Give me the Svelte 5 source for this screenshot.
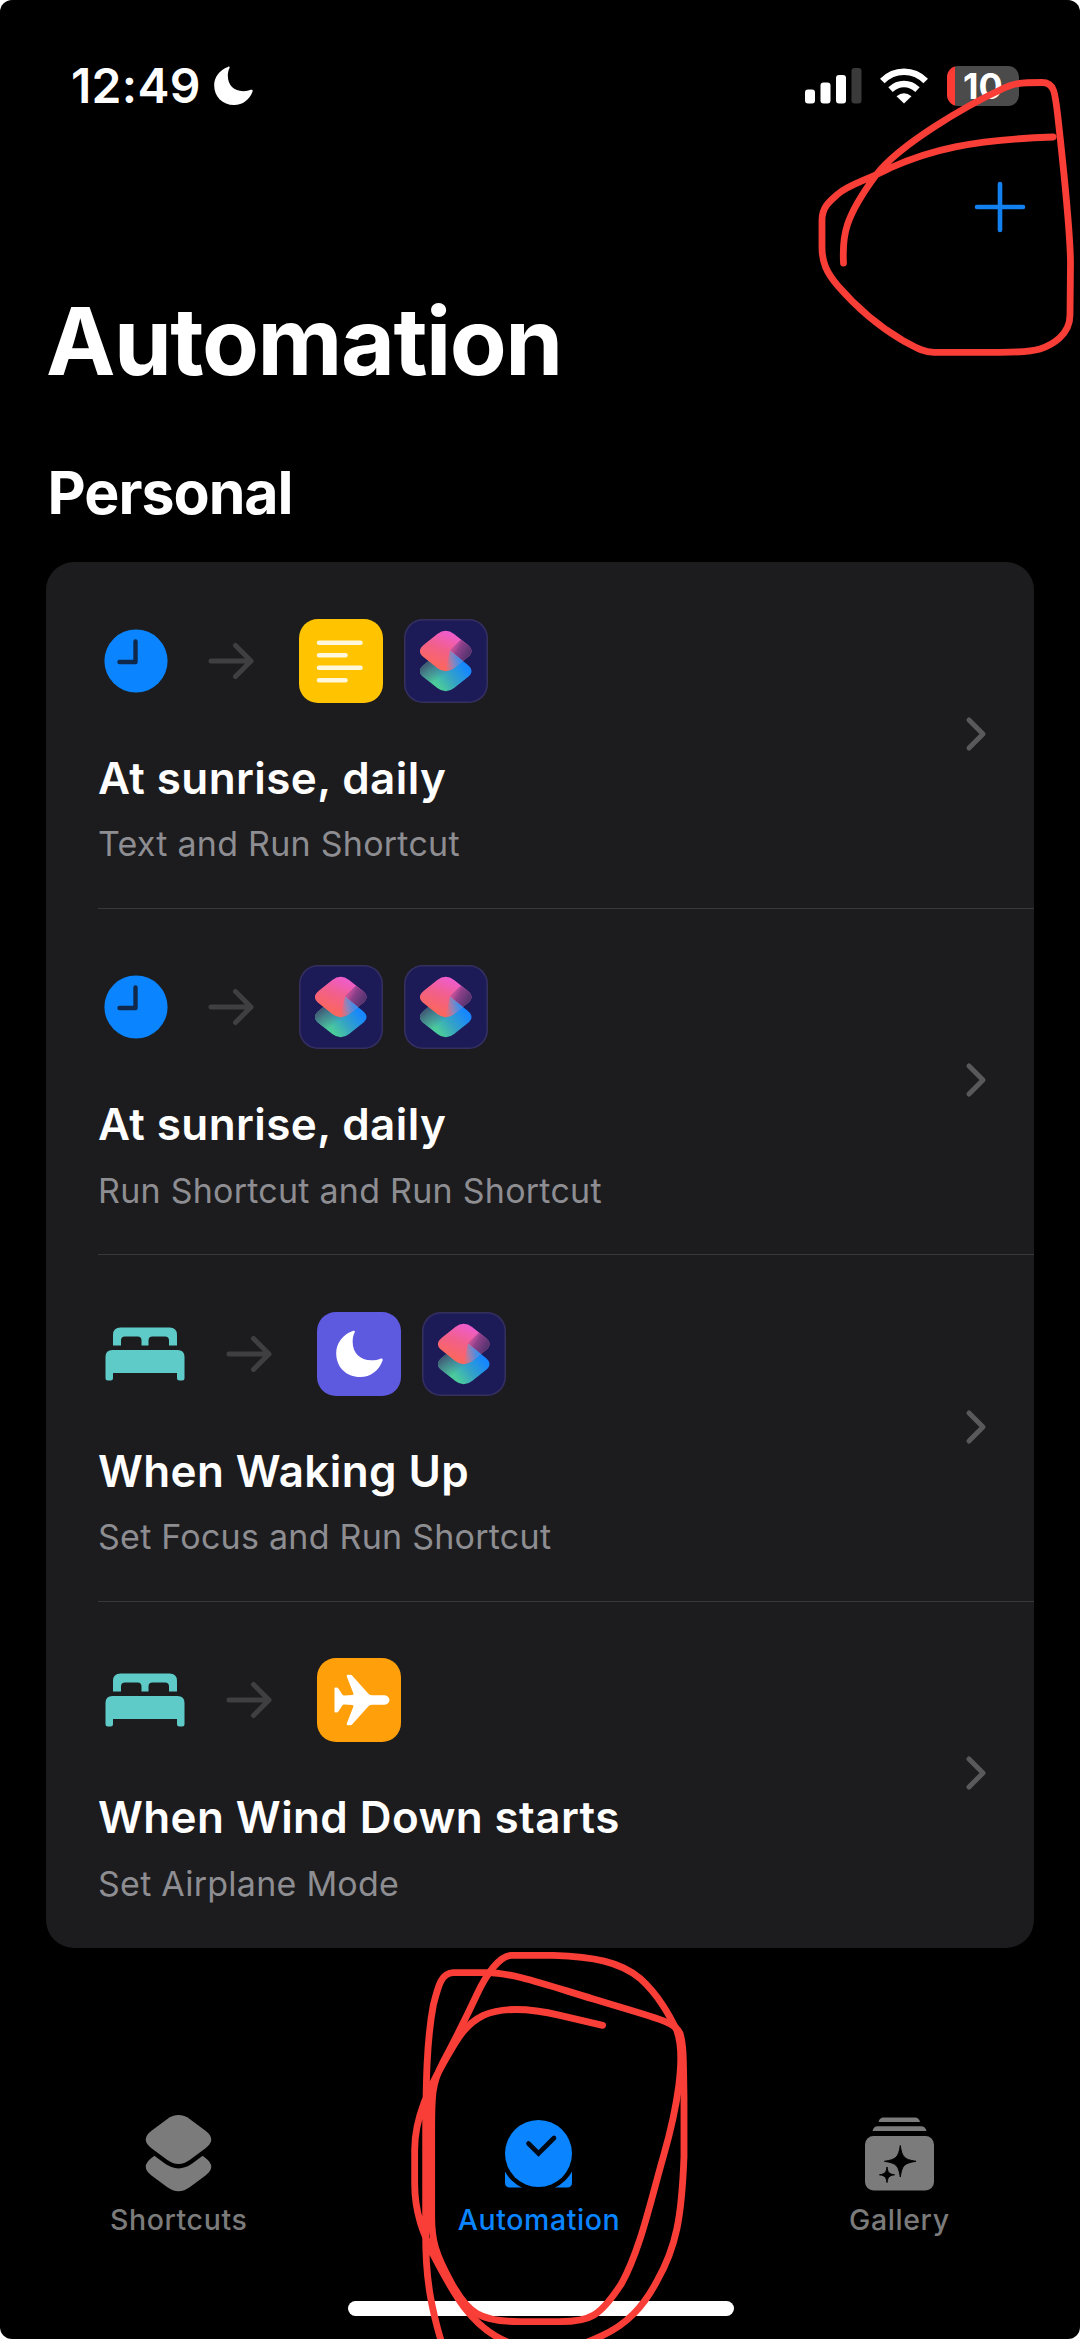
<script lang="ts">
	type Action = 'text' | 'shortcut' | 'focus' | 'airplane';

	interface Automation {
		trigger: 'clock' | 'bed';
		actions: Action[];
		title: string;
		summary: string;
	}

	const automations: Automation[] = [
		{
			trigger: 'clock',
			actions: ['text', 'shortcut'],
			title: 'At sunrise, daily',
			summary: 'Text and Run Shortcut'
		},
		{
			trigger: 'clock',
			actions: ['shortcut', 'shortcut'],
			title: 'At sunrise, daily',
			summary: 'Run Shortcut and Run Shortcut'
		},
		{
			trigger: 'bed',
			actions: ['focus', 'shortcut'],
			title: 'When Waking Up',
			summary: 'Set Focus and Run Shortcut'
		},
		{
			trigger: 'bed',
			actions: ['airplane'],
			title: 'When Wind Down starts',
			summary: 'Set Airplane Mode'
		}
	];

	const tabs = ['Shortcuts', 'Automation', 'Gallery'];
	let activeTab = $state('Automation');
</script>

{#snippet moon(size: number)}
	<svg width={size} height={size} viewBox="0 0 46 46" fill="currentColor">
		<path
			d="M16.4 1.1C17.6 .3 19 .8 18.3 2.3C16.9 5.2 16.3 8.3 16.3 11.6C16.3 22.6 23.5 29.7 34.6 29.7C38.3 29.7 41 29 43.3 28.1C45.1 27.5 46.1 28.5 45.5 30C42 39.6 33.9 46 23.7 46C10 46 .2 36.3 .2 22.7C.2 13.3 6.6 4.6 16.4 1.1Z"
		/>
	</svg>
{/snippet}

{#snippet triggerIcon(name: string)}
	{#if name === 'clock'}
		<svg width="64" height="64" viewBox="0 0 64 64">
			<circle cx="32" cy="32" r="31.6" fill="#0a84ff" />
			<path d="M31.5 12.5V33H15.5" fill="none" stroke="#10284a" stroke-width="4.400" stroke-linecap="round" stroke-linejoin="round" />
		</svg>
	{:else}
		<svg width="80" height="54" viewBox="0 0 80 54" fill="#5fcbc9">
			<path d="M8 18.500V8Q8 .500 15.500 .500H64.500Q72 .500 72 8V18.500H64V13.500Q64 9.500 60 9.500H47.500Q43.500 9.500 43.500 13.500V18.500H36.500V13.500Q36.500 9.500 32.500 9.500H20Q16 9.500 16 13.500V18.500Z" />
			<path d="M.500 30Q.500 23 7.500 23H72.500Q79.500 23 79.500 30V51Q79.500 53.500 77 53.500H74.500Q72 53.500 72 51V46H8V51Q8 53.500 5.500 53.500H3Q.500 53.500 .500 51Z" />
		</svg>
	{/if}
{/snippet}

{#snippet shortcutArt()}
	<svg width="84" height="84" viewBox="0 0 84 84">
		<defs>
			<linearGradient id="lower" x1="34" y1="66" x2="60" y2="46" gradientUnits="userSpaceOnUse">
				<stop offset="0" stop-color="#4bcb9c" />
				<stop offset=".45" stop-color="#35a3c4" />
				<stop offset="1" stop-color="#1687ff" />
			</linearGradient>
			<linearGradient id="lowerShade" x1="22" y1="43" x2="35" y2="60" gradientUnits="userSpaceOnUse">
				<stop offset="0" stop-color="#40506f" />
				<stop offset=".6" stop-color="#44788c" stop-opacity=".6" />
				<stop offset="1" stop-color="#44788c" stop-opacity="0" />
			</linearGradient>
			<linearGradient id="upper" x1="46" y1="12" x2="32" y2="46" gradientUnits="userSpaceOnUse">
				<stop offset="0" stop-color="#ee5cd2" />
				<stop offset=".55" stop-color="#f26088" />
				<stop offset="1" stop-color="#fb6660" />
			</linearGradient>
			<linearGradient id="upperShade" x1="46" y1="27" x2="64" y2="37" gradientUnits="userSpaceOnUse">
				<stop offset="0" stop-color="#b04c9f" stop-opacity=".3" />
				<stop offset=".45" stop-color="#8d4089" />
				<stop offset="1" stop-color="#553470" />
			</linearGradient>
			<linearGradient id="fold" x1="40" y1="47" x2="56" y2="44" gradientUnits="userSpaceOnUse">
				<stop offset="0" stop-color="#c77795" stop-opacity="0" />
				<stop offset=".55" stop-color="#9184b8" />
				<stop offset="1" stop-color="#3f8eea" />
			</linearGradient>
		</defs>
		<path d="M20.100 45.400L33.300 35.100H50L63.300 45.400Q71.700 52 63.300 58.600L50.100 68.900Q41.700 75.500 33.300 68.900L20.100 58.600Q11.700 52 20.100 45.400Z" fill="url(#lower)" />
		<path d="M20.100 45.400L33.300 35.100H50L63.300 45.400Q71.700 52 63.300 58.600L50.100 68.900Q41.700 75.500 33.300 68.900L20.100 58.600Q11.700 52 20.100 45.400Z" fill="url(#lowerShade)" />
		<path d="M33.300 15.100Q41.700 8.500 50.100 15.100L63.300 25.400Q71.700 32 63.300 38.600L50.100 48.900Q41.700 55.500 33.300 48.900L20.100 38.600Q11.700 32 20.100 25.400Z" fill="url(#upper)" />
		<path d="M46 31L57 20.500L63.300 25.400Q71.700 32 63.300 38.600L58.700 42.200Z" fill="url(#upperShade)" />
		<path d="M46 31.500L59.100 41.900L50.100 48.900Q45.900 52.200 41.700 52.200Z" fill="url(#fold)" />
	</svg>
{/snippet}

{#snippet actionIcon(name: Action)}
	<span class="tile {name}">
		{#if name === 'text'}
			<svg width="84" height="84" viewBox="0 0 84 84" fill="none" stroke="#fff8dc" stroke-width="4.600" stroke-linecap="round">
				<path d="M20 23.700H61.500M20 36.200H46.500M20 48.700H61.500M20 61.200H46.500" />
			</svg>
		{:else if name === 'shortcut'}
			{@render shortcutArt()}
		{:else if name === 'focus'}
			{@render moon(47)}
		{:else}
			<svg width="56" height="52" viewBox="0 0 56 52" fill="currentColor">
				<path d="M50 21.200C53.500 21.200 55.500 24 55.500 26S53.500 30.800 50 30.800H37.500Q35.500 30.800 34.200 32.400L18.300 50.300Q17.500 51.200 16.300 51.200H13.900Q12.200 51.200 12.800 49.500L19.400 32.600Q20 30.900 18.200 30.900L10.200 30.500Q9 30.500 8.300 31.500L4.400 37.500Q3.700 38.500 2.600 38.500H1.600Q.500 38.500 .500 37.300V14.700Q.500 13.500 1.600 13.500H2.600Q3.700 13.500 4.400 14.500L8.300 20.500Q9 21.500 10.200 21.500L18.200 21.100Q20 21.100 19.400 19.400L12.800 2.500Q12.200 .800 13.900 .800H16.300Q17.500 .800 18.300 1.700L34.200 19.600Q35.500 21.200 37.500 21.200Z" />
			</svg>
		{/if}
	</span>
{/snippet}

{#snippet tabIcon(name: string)}
	{#if name === 'Shortcuts'}
		<svg width="67" height="77" viewBox="0 0 67 77" fill="currentColor">
			<path d="M22 31.400L6.500 43Q-5 51.700 6.500 60.400L22 72Q33.500 80.400 45 72L60.500 60.400Q72 51.700 60.500 43L45 31.400Z" />
			<path d="M22 4.200Q33.500 -4.200 45 4.200L60.500 15.800Q72 24.500 60.500 33.200L45 44.800Q33.500 53.200 22 44.800L6.500 33.200Q-5 24.500 6.500 15.800Z" stroke="#000" stroke-width="8.600" paint-order="stroke" />
		</svg>
	{:else if name === 'Automation'}
		<svg width="67" height="68" viewBox="0 0 67 68" fill="currentColor">
			<path d="M0 51.500V62.500Q0 67.500 5 67.500H62Q67 67.500 67 62.500V51.500Z" />
			<circle cx="33.500" cy="33.500" r="38" fill="#000" />
			<circle cx="33.500" cy="33.500" r="33.500" />
			<path d="M23.500 23.500L33.500 33.500L49 18" fill="none" stroke="#000814" stroke-width="4.600" stroke-linecap="round" />
		</svg>
	{:else}
		<svg width="69" height="74" viewBox="0 0 69 74" fill="currentColor">
			<path d="M13.500 5Q14.500 .500 18.500 .500H50Q54 .500 55 5Z" />
			<path d="M7.500 14Q8.500 9.300 12.500 9.300H56Q60.500 9.300 61.500 14Z" />
			<rect y="19" width="69" height="54.500" rx="8.500" />
			<path d="M35.300 28.500C37 40 39 42.500 51 44.300C39 46.200 37 48.500 35.300 60C33.500 48.500 31.500 46.200 19.500 44.300C31.500 42.500 33.500 40 35.300 28.500Z" fill="#000" stroke="#000" stroke-linejoin="round" />
			<path d="M22 50C22.800 55.500 24 57 29.500 57.800C24 58.700 22.800 60 22 65.500C21.200 60 20 58.700 14.500 57.800C20 57 21.200 55.500 22 50Z" fill="#000" stroke="#000" stroke-linejoin="round" />
		</svg>
	{/if}
{/snippet}

<div class="screen">
	<header class="status-bar">
		<div class="clock">
			<span class="time">12:49</span>
			{@render moon(39)}
		</div>
		<div class="indicators">
			<svg class="signal" width="57" height="36" viewBox="0 0 57 36" fill="#fff">
				<rect y="21.500" width="10" height="14" rx="3" />
				<rect x="15.500" y="14.500" width="10" height="21" rx="3" />
				<rect x="31" y="7" width="10" height="28.500" rx="3" />
				<rect x="46.500" y="0" width="10" height="35.500" rx="3" fill="#3a3a3a" />
			</svg>
			<svg class="wifi" width="48" height="36" viewBox="0 0 48 36" fill="none" stroke="#fff" stroke-width="6.400">
				<path d="M2.300 13Q11.500 3.700 24 3.700T45.700 13" />
				<path d="M10.500 21.600Q16.500 16 24 16T37.500 21.600" />
				<path d="M24 35.600L16.500 28.200Q24 22.200 31.500 28.200Z" fill="#fff" stroke="none" />
			</svg>
			<div class="battery"><span>10</span></div>
		</div>
	</header>

	<div class="toolbar">
		<button class="add" aria-label="New automation">
			<svg width="52" height="52" viewBox="0 0 52 52" fill="none" stroke="currentColor" stroke-width="4.600" stroke-linecap="round">
				<path d="M26 3V49M3 26H49" />
			</svg>
		</button>
	</div>

	<h1>Automation</h1>
	<h2>Personal</h2>

	<ul class="card">
		{#each automations as item}
			<li class="row">
				<div class="row-body">
					<div class="flow">
						<span class="trigger {item.trigger}-trigger">{@render triggerIcon(item.trigger)}</span>
						<svg class="arrow" width="46" height="38" viewBox="0 0 46 38" fill="none" stroke="#3f3f41" stroke-width="5" stroke-linecap="round" stroke-linejoin="round">
							<path d="M3 19H43M27.500 3.500L43 19L27.500 34.500" />
						</svg>
						<div class="tiles">
							{#each item.actions as action}
								{@render actionIcon(action)}
							{/each}
						</div>
					</div>
					<h3>{item.title}</h3>
					<p>{item.summary}</p>
				</div>
				<svg class="chevron" width="22" height="36" viewBox="0 0 22 36" fill="none" stroke="#59595c" stroke-width="5" stroke-linecap="round" stroke-linejoin="round">
					<path d="M4 4L18 18L4 32" />
				</svg>
			</li>
		{/each}
	</ul>

	<nav class="tab-bar">
		{#each tabs as tab}
			<button class="tab" class:active={activeTab === tab} onclick={() => (activeTab = tab)}>
				<span class="tab-icon">{@render tabIcon(tab)}</span>
				<span class="tab-label">{tab}</span>
			</button>
		{/each}
	</nav>

	<div class="home-indicator"></div>

	<!-- hand-drawn marker rings -->
	<svg class="marker" width="1080" height="2339" viewBox="0 0 1080 2339" fill="none" stroke="#f93e37" stroke-linecap="round" stroke-linejoin="round">
		<path
			stroke-width="6.800"
			d="M843.500 263C842 235 845 217 876 175C901 143 968 105 1000 90C1014 83 1020 82.500 1042 82.500C1054 82.500 1055 91 1058 118C1061 145 1070 230 1070.500 262L1070 315C1070 335 1052 345 1040 349C1030 352 1018 352.300 1000 352.300H934C923 352 917 348 902 340C880 327 858 309 838 286C826 272 822 262 822 247V220C822 207 830 201 838 194C850 184 863 182 890 168C930 150 970 140 1053 137"
		/>
		<g transform="translate(380 1930) scale(.33333)" stroke-width="20.500">
			<path d="M668 286L540 256C450 235 370 230 310 256C250 285 225 340 190 400C150 470 104 560 104 660V760C104 850 130 910 160 975C215 1080 270 1190 380 1235C480 1270 580 1260 660 1220C740 1185 790 1130 830 1055C890 950 905 860 912 680V500C910 400 912 350 900 310C885 275 830 265 640 207C500 165 400 128 320 128H220C185 128 175 165 160 225C140 330 138 460 137 600V920C137 1050 155 1140 187 1245" />
			<path d="M155 600C155 500 155 460 190 395C235 310 255 270 290 195C320 130 360 76 395 76H520C640 80 720 95 780 145C840 200 870 260 890 300C920 380 890 540 850 680C810 820 780 960 725 1060C660 1160 630 1175 540 1175H420C300 1175 265 1150 215 1060C165 970 155 930 155 860Z" />
		</g>
	</svg>
</div>

<style>
	:global(body) {
		background: #fff;
	}

	.screen {
		position: relative;
		display: flex;
		flex-direction: column;
		width: 1080px;
		height: 2339px;
		overflow: hidden;
		background: #000;
		border-radius: 12px;
		color: #fff;
		font-family: Inter, 'Liberation Sans', sans-serif;
	}

	svg {
		display: block;
		flex-shrink: 0;
	}

	h1,
	h2,
	h3,
	p,
	ul {
		margin: 0;
		padding: 0;
	}

	button {
		padding: 0;
		border: none;
		background: none;
		font: inherit;
	}

	.status-bar {
		box-sizing: border-box;
		height: 114px;
		padding: 57px 61px 0 71px;
		display: flex;
		align-items: center;
		justify-content: space-between;
	}

	.clock,
	.indicators {
		display: flex;
		align-items: center;
	}

	.clock {
		gap: 13px;
	}

	.time {
		font-size: 48px;
		font-weight: 600;
		line-height: 58px;
		letter-spacing: 0.3px;
	}

	.wifi {
		margin: 0 19px 0 18px;
	}

	.battery {
		width: 72px;
		height: 40px;
		border-radius: 11px;
		background: linear-gradient(to right, #fb3b34 8px, #4b4b4b 8px);
		text-align: center;
		font-size: 36px;
		font-weight: 700;
		line-height: 40px;
	}

	.toolbar {
		height: 186px;
		padding-right: 54px;
		display: flex;
		align-items: center;
		justify-content: flex-end;
	}

	.add {
		color: #1380f0;
	}

	h1 {
		padding-left: 46px;
		font-size: 93px;
		font-weight: 700;
		line-height: 82px;
		letter-spacing: -1.5px;
	}

	h2 {
		padding: 67px 0 25px 47.5px;
		font-size: 59px;
		font-weight: 700;
		line-height: 88px;
		letter-spacing: -1px;
	}

	.card {
		margin: 0 46px;
		border-radius: 28px;
		background: #1c1c1e;
		list-style: none;
	}

	.row {
		box-sizing: border-box;
		height: 346.5px;
		margin-left: 52px;
		padding-right: 47px;
		display: flex;
		align-items: center;
		justify-content: space-between;
	}

	.row + .row {
		box-shadow: 0 -1px 0 #38383a;
	}

	.row-body {
		height: 100%;
	}

	.flow {
		padding-top: 56.5px;
		height: 84px;
		display: flex;
		align-items: center;
	}

	.clock-trigger {
		padding: 0 40.5px 0 5.5px;
	}

	.bed-trigger {
		padding: 0 41px 0 7px;
	}

	.arrow {
		margin-right: 45px;
	}

	.tiles {
		display: flex;
		gap: 21px;
	}

	.tile {
		display: flex;
		align-items: center;
		justify-content: center;
		width: 84px;
		height: 84px;
		border-radius: 19px;
		overflow: hidden;
	}

	.tile.text {
		background: #ffc300;
	}

	.tile.shortcut {
		background: #1c1b58;
		box-shadow: inset 0 0 0 1.5px #35305c;
	}

	.tile.focus {
		background: #5e5ae0;
	}

	.tile.airplane {
		box-sizing: border-box;
		padding-left: 5px;
		background: #ff9f0a;
	}

	h3 {
		margin-top: 45px;
		font-size: 44px;
		font-weight: 600;
		line-height: 60px;
		letter-spacing: 0.4px;
	}

	p {
		margin-top: 13.5px;
		color: #8d8d92;
		font-size: 34px;
		line-height: 46px;
		letter-spacing: 0.25px;
	}

	.chevron {
		margin-bottom: 3px;
	}

	.tab-bar {
		display: grid;
		grid-template-columns: repeat(3, 1fr);
		width: 1081px;
		margin: 167px 0 0 -1.5px;
	}

	.tab {
		display: flex;
		flex-direction: column;
		align-items: center;
		color: #7b7b7b;
	}

	.tab.active {
		color: #0a84ff;
	}

	.tab-icon {
		display: flex;
		align-items: center;
		height: 77px;
	}

	.tab-label {
		margin-top: 9.5px;
		font-size: 28.5px;
		font-weight: 500;
		line-height: 36px;
		letter-spacing: 0.6px;
	}

	.home-indicator {
		width: 386px;
		height: 15px;
		margin: 63.5px 0 0 348px;
		border-radius: 8px;
		background: #fff;
	}

	.marker {
		position: absolute;
		top: 0;
		left: 0;
		pointer-events: none;
	}
</style>
